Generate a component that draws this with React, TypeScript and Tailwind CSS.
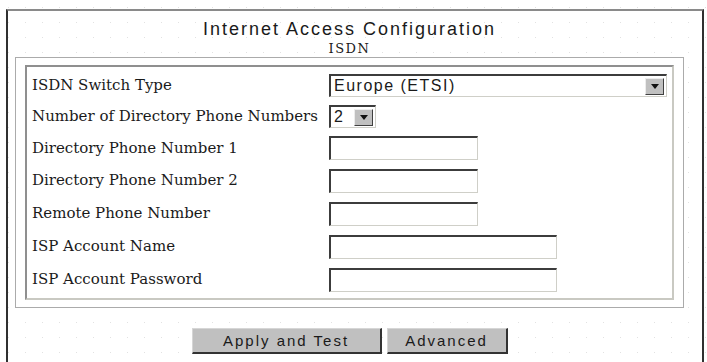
import React from 'react';

const sans = { fontFamily: '"Liberation Sans", Arial, sans-serif' };
const serif = { fontFamily: '"DejaVu Serif", "Liberation Serif", serif' };

const DropButton = () => (
    <div className="flex h-[17px] w-[19px] shrink-0 items-center justify-center border border-t-[#ececec] border-l-[#ececec] border-r-[#404040] border-b-[#404040] bg-[#c0c0c0]">
        <svg width="8" height="5" viewBox="0 0 8 5">
            <path d="M0 0 H8 L4 5 Z" fill="#111" />
        </svg>
    </div>
);

const Select = ({ value, width }: { value: string; width: string }) => (
    <div
        className={`flex h-[23px] items-center justify-between border-t-2 border-l-2 border-r border-b border-t-[#3c3c3c] border-l-[#3c3c3c] border-r-[#cfcfc8] border-b-[#cfcfc8] bg-white pr-[2px] ${width}`}
    >
        <span className="pl-[3px] text-[16px] leading-none tracking-[1.5px] text-[#1a1a1a]" style={sans}>
            {value}
        </span>
        <DropButton />
    </div>
);

const Input = ({ width }: { width: string }) => (
    <div
        className={`h-[24px] border-t-2 border-l-2 border-r border-b border-t-[#3c3c3c] border-l-[#3c3c3c] border-r-[#cfcfc8] border-b-[#cfcfc8] bg-white ${width}`}
    />
);

const rows: { label: string; height: string; control: React.ReactNode }[] = [
    { label: 'ISDN Switch Type', height: 'h-[31px]', control: <Select value="Europe (ETSI)" width="w-[338px]" /> },
    { label: 'Number of Directory Phone Numbers', height: 'h-[31px]', control: <Select value="2" width="w-[47px]" /> },
    { label: 'Directory Phone Number 1', height: 'h-[32px]', control: <Input width="w-[149px]" /> },
    { label: 'Directory Phone Number 2', height: 'h-[33px]', control: <Input width="w-[149px]" /> },
    { label: 'Remote Phone Number', height: 'h-[33px]', control: <Input width="w-[149px]" /> },
    { label: 'ISP Account Name', height: 'h-[33px]', control: <Input width="w-[228px]" /> },
    { label: 'ISP Account Password', height: 'h-[33px]', control: <Input width="w-[228px]" /> },
];

export default function App() {
    return (
        <div className="h-[362px] w-[707px] overflow-hidden bg-white bg-[radial-gradient(circle,#e2e2e2_0.6px,transparent_1px)] bg-size-[17px_15px] pl-[6px] pt-[9px]">
            {/* Frame */}
            <div className="h-[400px] w-[698px] border-l-2 border-t-2 border-r-2 border-l-[#303030] border-t-[#8a8a8a] border-r-[#303030] pl-[7px] pt-[8px]">
                <div className="w-[669px]">
                    {/* Header */}
                    <div className="text-center text-[18px] leading-[20px] tracking-[2px] text-[#1a1a1a]" style={sans}>
                        Internet Access Configuration
                    </div>
                    <div className="mt-[3px] text-center text-[13px] leading-[14px] tracking-[1.5px] text-[#1a1a1a]" style={serif}>
                        ISDN
                    </div>

                    {/* Group box */}
                    <div className="mt-[1px] h-[251px] border border-[#ababab] px-[9px] py-[7px] shadow-[inset_1px_1px_0_#ffffff]">
                        <div className="h-[235px] border-2 border-t-[#8f8f8f] border-l-[#8f8f8f] border-r-[#c9c9c2] border-b-[#c9c9c2] bg-white pl-[5px] pt-[3px]">
                            {rows.map((row) => (
                                <div key={row.label} className={`grid grid-cols-[297px_1fr] items-center ${row.height}`}>
                                    <span className="text-[15px] leading-none text-[#1a1a1a]" style={serif}>
                                        {row.label}
                                    </span>
                                    <div>{row.control}</div>
                                </div>
                            ))}
                        </div>
                    </div>

                    {/* Buttons */}
                    <div className="mt-[20px] flex justify-center gap-[5px]">
                        <button
                            className="h-[26px] w-[190px] border-t border-l border-r-2 border-b-2 border-t-[#d6d6d6] border-l-[#d6d6d6] border-r-[#333] border-b-[#333] bg-[#c0c0c0] text-[15px] leading-none tracking-[2px] text-[#1a1a1a]"
                            style={sans}
                        >
                            Apply and Test
                        </button>
                        <button
                            className="h-[26px] w-[121px] border-t border-l border-r-2 border-b-2 border-t-[#d6d6d6] border-l-[#d6d6d6] border-r-[#333] border-b-[#333] bg-[#c0c0c0] text-[15px] leading-none tracking-[2px] text-[#1a1a1a]"
                            style={sans}
                        >
                            Advanced
                        </button>
                    </div>
                </div>
            </div>
        </div>
    );
}
